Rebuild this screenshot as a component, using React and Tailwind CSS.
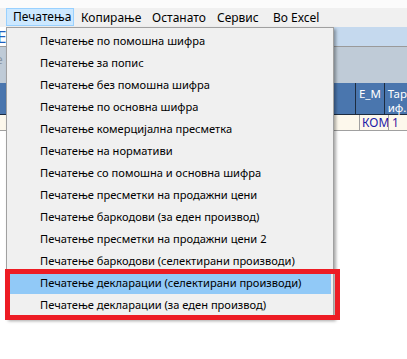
import React from 'react'

const menuBar = [
    { label: 'Печатења', cls: 'w-[68px] pl-[6px]', active: true },
    { label: 'Копирање', cls: 'w-[72px] pl-[7px]' },
    { label: 'Останато', cls: 'w-[65px] pl-[6px]' },
    { label: 'Сервис', cls: 'w-[55px] pl-[6px]' },
    { label: 'Во Excel', cls: 'w-[80px] pl-[7px]' },
]

const items = [
    'Печатење по помошна шифра',
    'Печатење за попис',
    'Печатење без помошна шифра',
    'Печатење по основна шифра',
    'Печатење комерцијална пресметка',
    'Печатење на нормативи',
    'Печатење со помошна и основна шифра',
    'Печатење пресметки на продажни цени',
    'Печатење баркодови (за еден производ)',
    'Печатење пресметки на продажни цени 2',
    'Печатење баркодови (селектирани производи)',
    'Печатење декларации (селектирани производи)',
    'Печатење декларации (за еден производ)',
]

export default function App() {
    return (
        <div className="relative w-[407px] h-[359px] bg-white overflow-hidden text-[12px] text-black font-['Noto_Sans',sans-serif]">
            {/* top strip + menu bar */}
            <div className="h-[8px] bg-[#fbfbfb]" />
            <div className="flex h-[19px] bg-[#f0f0f0] pl-[6px]">
                {menuBar.map((m) =>
                    m.active ? (
                        <div key={m.label} className={m.cls + ' flex items-center h-[18px] bg-[#cce8ff] border border-[#99d1ff]'}>
                            {m.label}
                        </div>
                    ) : (
                        <div key={m.label} className={m.cls + ' flex items-center'}>
                            {m.label}
                        </div>
                    )
                )}
            </div>

            {/* window content behind the menu */}
            <div className="flex flex-col">
                <div className="flex h-[19px]">
                    <div className="w-[200px] bg-white text-[#1f5fbf] text-[17px] leading-[19px] -ml-[3px]">Е</div>
                    <div className="flex-1 bg-[#c5d9ee]" />
                </div>
                <div className="h-px bg-[#9a9a9a]" />
                <div className="h-[36px] bg-[#bfcbd7] text-[#8a96a3] -ml-[4px] pt-[4px]">е</div>
                <div className="flex h-[32px] bg-[#4a76ae] text-white border-b border-[#1d2c40] leading-[14px] text-[11.5px]">
                    <div className="w-[359px]" />
                    <div className="w-[29px] border-l border-[#1d2c40] pl-[3px] pt-[4px]">E_M</div>
                    <div className="flex-1 border-l border-[#1d2c40] pl-[3px] pt-[4px] flex flex-col">
                        <span>Тар</span>
                        <span>иф.</span>
                    </div>
                </div>
                <div className="flex h-[16px] bg-[#fdf8ec] border-b border-[#a0a0a0] leading-[15px]">
                    <div className="w-[359px]" />
                    <div className="w-[29px] border-l border-[#a0a0a0] pl-[2px] text-[#1a1aa8]">КОМ</div>
                    <div className="flex-1 border-l border-[#a0a0a0] pl-[3px] text-[#3a1a9c]">1</div>
                </div>
            </div>

            {/* dropdown menu */}
            <div className="absolute left-[6px] top-[27px] w-[328px] pt-[2px] pb-[2px] bg-[#f0f0f0] border border-[#a0a0a0] shadow-[2px_2px_3px_rgba(0,0,0,0.35)] text-[11.1px]">
                {items.map((t, i) => (
                    <div
                        key={t}
                        className={
                            'mx-[2px] h-[22px] flex items-center pl-[31px] whitespace-nowrap ' +
                            (i === 11 ? 'bg-[#91c9f7]' : '')
                        }
                    >
                        {t}
                    </div>
                ))}
            </div>

            {/* red annotation box */}
            <div className="absolute left-[5px] top-[269px] w-[335px] h-[51px] border-[5px] border-[#ed1c24]" />
        </div>
    )
}
